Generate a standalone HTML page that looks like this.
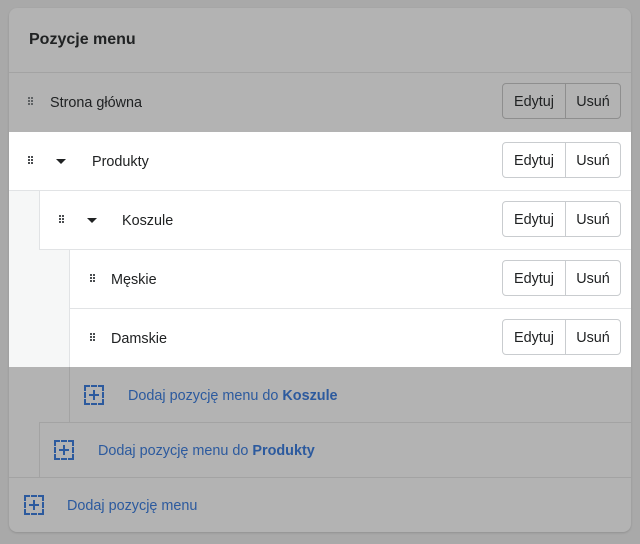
<!DOCTYPE html>
<html><head><meta charset="utf-8"><style>
*{box-sizing:border-box;margin:0;padding:0}
body{width:640px;height:544px;background:#a9a9a9;font-family:"Liberation Sans",sans-serif;position:relative;overflow:hidden;color:#202223}
.card{position:absolute;left:9px;top:8px;width:622px;height:524px;background:#b3b3b3;border-radius:8px;box-shadow:0 1px 2px rgba(0,0,0,.15);overflow:hidden}
.abs{position:absolute}
.t{position:absolute;font-size:14.4px;line-height:16px}
.line{position:absolute;height:1px;background:#a3a3a3}
.wl{position:absolute;height:1px;background:#e1e3e5}
.btns{position:absolute;width:119px;height:36px;border:1px solid #c9cccf;border-radius:4px;display:flex;font-size:14.4px;line-height:34px;background:#fff}
.btns.g{background:#b3b3b3;border-color:#8e8e8e}
.btns span{display:block;text-align:center;padding-top:1px}
.btns span:first-child{width:63px;border-right:1px solid #c9cccf}
.btns.g span:first-child{border-right-color:#8e8e8e}
.btns span:last-child{flex:1}
.drag{position:absolute}
.car{position:absolute;width:0;height:0;border-left:5px solid transparent;border-right:5px solid transparent;border-top:5px solid #202223}
.plus{position:absolute;width:20px;height:20px;border:2px dashed #2c5a9e}
.plus:before{content:"";position:absolute;left:3px;top:7px;width:10px;height:2px;background:#2c5a9e}
.plus:after{content:"";position:absolute;left:7px;top:3px;width:2px;height:10px;background:#2c5a9e}
.blue{color:#2c5a9e}
</style></head><body>
<div class="card">
 <div class="t" style="left:20px;top:24px;font-size:16px;font-weight:bold;color:#202223">Pozycje menu</div>
 <div class="line" style="left:0;top:64px;width:622px"></div>
 <svg class="drag" width="6" height="9" style="left:19px;top:89px;opacity:.8"><g fill="#4a4d50"><rect x="0" y="0" width="2" height="2"/><rect x="3" y="0" width="2" height="2"/><rect x="0" y="3" width="2" height="2"/><rect x="3" y="3" width="2" height="2"/><rect x="0" y="6" width="2" height="2"/><rect x="3" y="6" width="2" height="2"/></g></svg>
 <div class="t" style="left:41px;top:87px">Strona główna</div>
 <div class="btns g" style="left:493px;top:75px"><span>Edytuj</span><span>Usuń</span></div>
 <div class="abs" style="left:0;top:124px;width:622px;height:235px;background:#fff"></div>
 <div class="abs" style="left:0;top:183px;width:30px;height:176px;background:#f6f7f7"></div>
 <div class="abs" style="left:30px;top:242px;width:30px;height:117px;background:#f6f7f7"></div>
 <div class="wl" style="left:0;top:182px;width:622px"></div>
 <div class="abs" style="left:30px;top:183px;width:1px;height:59px;background:#e1e3e5"></div>
 <div class="wl" style="left:30px;top:241px;width:592px"></div>
 <div class="abs" style="left:60px;top:242px;width:1px;height:117px;background:#e1e3e5"></div>
 <div class="wl" style="left:60px;top:300px;width:562px"></div>
 <svg class="drag" width="6" height="9" style="left:19px;top:148px"><g fill="#4a4d50"><rect x="0" y="0" width="2" height="2"/><rect x="3" y="0" width="2" height="2"/><rect x="0" y="3" width="2" height="2"/><rect x="3" y="3" width="2" height="2"/><rect x="0" y="6" width="2" height="2"/><rect x="3" y="6" width="2" height="2"/></g></svg>
 <div class="car" style="left:47px;top:151px"></div>
 <div class="t" style="left:83px;top:146px">Produkty</div>
 <div class="btns" style="left:493px;top:134px"><span>Edytuj</span><span>Usuń</span></div>
 <svg class="drag" width="6" height="9" style="left:50px;top:207px"><g fill="#4a4d50"><rect x="0" y="0" width="2" height="2"/><rect x="3" y="0" width="2" height="2"/><rect x="0" y="3" width="2" height="2"/><rect x="3" y="3" width="2" height="2"/><rect x="0" y="6" width="2" height="2"/><rect x="3" y="6" width="2" height="2"/></g></svg>
 <div class="car" style="left:78px;top:210px"></div>
 <div class="t" style="left:113px;top:205px">Koszule</div>
 <div class="btns" style="left:493px;top:193px"><span>Edytuj</span><span>Usuń</span></div>
 <svg class="drag" width="6" height="9" style="left:81px;top:266px"><g fill="#4a4d50"><rect x="0" y="0" width="2" height="2"/><rect x="3" y="0" width="2" height="2"/><rect x="0" y="3" width="2" height="2"/><rect x="3" y="3" width="2" height="2"/><rect x="0" y="6" width="2" height="2"/><rect x="3" y="6" width="2" height="2"/></g></svg>
 <div class="t" style="left:102px;top:264px">Męskie</div>
 <div class="btns" style="left:493px;top:252px"><span>Edytuj</span><span>Usuń</span></div>
 <svg class="drag" width="6" height="9" style="left:81px;top:325px"><g fill="#4a4d50"><rect x="0" y="0" width="2" height="2"/><rect x="3" y="0" width="2" height="2"/><rect x="0" y="3" width="2" height="2"/><rect x="3" y="3" width="2" height="2"/><rect x="0" y="6" width="2" height="2"/><rect x="3" y="6" width="2" height="2"/></g></svg>
 <div class="t" style="left:102px;top:323px">Damskie</div>
 <div class="btns" style="left:493px;top:311px"><span>Edytuj</span><span>Usuń</span></div>
 <div class="abs" style="left:60px;top:359px;width:1px;height:55px;background:#a3a3a3"></div>
 <div class="line" style="left:30px;top:414px;width:592px"></div>
 <div class="plus" style="left:75px;top:377px"></div>
 <div class="t blue" style="left:119px;top:380px">Dodaj pozycję menu do <b>Koszule</b></div>
 <div class="abs" style="left:30px;top:414px;width:1px;height:55px;background:#a3a3a3"></div>
 <div class="line" style="left:0;top:469px;width:622px"></div>
 <div class="plus" style="left:45px;top:432px"></div>
 <div class="t blue" style="left:89px;top:435px">Dodaj pozycję menu do <b>Produkty</b></div>
 <div class="plus" style="left:15px;top:487px"></div>
 <div class="t blue" style="left:58px;top:490px">Dodaj pozycję menu</div>
</div>
</body></html>
